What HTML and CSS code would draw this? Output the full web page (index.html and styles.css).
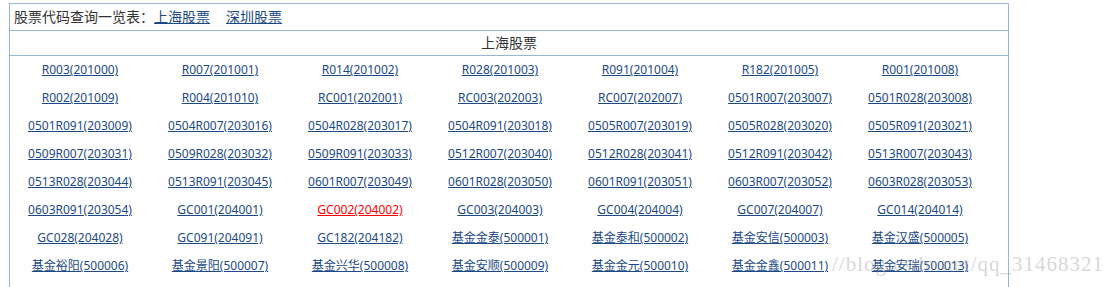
FILE: index.html
```html
<!DOCTYPE html>
<html lang="zh-CN">
<head>
<meta charset="utf-8">
<title>股票代码查询一览表</title>
<link rel="stylesheet" href="styles.css">
</head>
<body>
<div class="board">
  <div class="board-title">
    <span class="label">股票代码查询一览表：</span><a class="nav-link" href="#sh">上海股票</a><a class="nav-link" href="#sz">深圳股票</a>
  </div>
  <div class="board-sub">上海股票</div>
  <ul class="codes">
    <li><a href="#">R003(201000)</a></li>
    <li><a href="#">R007(201001)</a></li>
    <li><a href="#">R014(201002)</a></li>
    <li><a href="#">R028(201003)</a></li>
    <li><a href="#">R091(201004)</a></li>
    <li><a href="#">R182(201005)</a></li>
    <li><a href="#">R001(201008)</a></li>
    <li><a href="#">R002(201009)</a></li>
    <li><a href="#">R004(201010)</a></li>
    <li><a href="#">RC001(202001)</a></li>
    <li><a href="#">RC003(202003)</a></li>
    <li><a href="#">RC007(202007)</a></li>
    <li><a href="#">0501R007(203007)</a></li>
    <li><a href="#">0501R028(203008)</a></li>
    <li><a href="#">0501R091(203009)</a></li>
    <li><a href="#">0504R007(203016)</a></li>
    <li><a href="#">0504R028(203017)</a></li>
    <li><a href="#">0504R091(203018)</a></li>
    <li><a href="#">0505R007(203019)</a></li>
    <li><a href="#">0505R028(203020)</a></li>
    <li><a href="#">0505R091(203021)</a></li>
    <li><a href="#">0509R007(203031)</a></li>
    <li><a href="#">0509R028(203032)</a></li>
    <li><a href="#">0509R091(203033)</a></li>
    <li><a href="#">0512R007(203040)</a></li>
    <li><a href="#">0512R028(203041)</a></li>
    <li><a href="#">0512R091(203042)</a></li>
    <li><a href="#">0513R007(203043)</a></li>
    <li><a href="#">0513R028(203044)</a></li>
    <li><a href="#">0513R091(203045)</a></li>
    <li><a href="#">0601R007(203049)</a></li>
    <li><a href="#">0601R028(203050)</a></li>
    <li><a href="#">0601R091(203051)</a></li>
    <li><a href="#">0603R007(203052)</a></li>
    <li><a href="#">0603R028(203053)</a></li>
    <li><a href="#">0603R091(203054)</a></li>
    <li><a href="#">GC001(204001)</a></li>
    <li><a class="active" href="#">GC002(204002)</a></li>
    <li><a href="#">GC003(204003)</a></li>
    <li><a href="#">GC004(204004)</a></li>
    <li><a href="#">GC007(204007)</a></li>
    <li><a href="#">GC014(204014)</a></li>
    <li><a href="#">GC028(204028)</a></li>
    <li><a href="#">GC091(204091)</a></li>
    <li><a href="#">GC182(204182)</a></li>
    <li><a href="#">基金金泰(500001)</a></li>
    <li><a href="#">基金泰和(500002)</a></li>
    <li><a href="#">基金安信(500003)</a></li>
    <li><a href="#">基金汉盛(500005)</a></li>
    <li><a href="#">基金裕阳(500006)</a></li>
    <li><a href="#">基金景阳(500007)</a></li>
    <li><a href="#">基金兴华(500008)</a></li>
    <li><a href="#">基金安顺(500009)</a></li>
    <li><a href="#">基金金元(500010)</a></li>
    <li><a href="#">基金金鑫(500011)</a></li>
    <li><a href="#">基金安瑞(500013)</a></li>
  </ul>
</div>
<div class="watermark">//blog.csdn.net/qq_31468321</div>
</body>
</html>
```
FILE: styles.css
```css
html, body {
  margin: 0;
  padding: 0;
  background: #ffffff;
}
body {
  font-family: "Noto Sans", "Noto Sans CJK SC", sans-serif;
  color: #333333;
  position: relative;
  height: 287px;
  overflow: hidden;
}
.board {
  margin: 3px 0 0 9px;
  width: 998px;
  border: 1px solid #97b6d9;
  border-bottom: none;
}
.board-title {
  height: 26px;
  line-height: 26px;
  padding-left: 4px;
  font-size: 14px;
  border-bottom: 1px solid #97b6d9;
  white-space: nowrap;
}
.board-title .label {
  color: #333333;
}
.nav-link {
  color: #1b4a86;
  text-decoration: underline;
  margin-right: 16px;
}
.board-sub {
  height: 24px;
  line-height: 24px;
  text-align: center;
  font-size: 14px;
  border-bottom: 1px solid #97b6d9;
}
.codes {
  list-style: none;
  margin: 0;
  padding: 0 0 24px 0;
  display: grid;
  grid-template-columns: repeat(7, 140px);
  grid-auto-rows: 28px;
}
.codes li {
  text-align: center;
  line-height: 28px;
  font-size: 12px;
  white-space: nowrap;
}
.codes a {
  color: #1b4a86;
  text-decoration: underline;
}
.codes a.active {
  color: #ff0000;
}
.watermark {
  position: absolute;
  left: 832px;
  top: 252px;
  font-family: "Liberation Serif", serif;
  font-size: 21px;
  letter-spacing: 1px;
  color: rgba(150, 150, 150, 0.4);
  white-space: nowrap;
  pointer-events: none;
}
```
